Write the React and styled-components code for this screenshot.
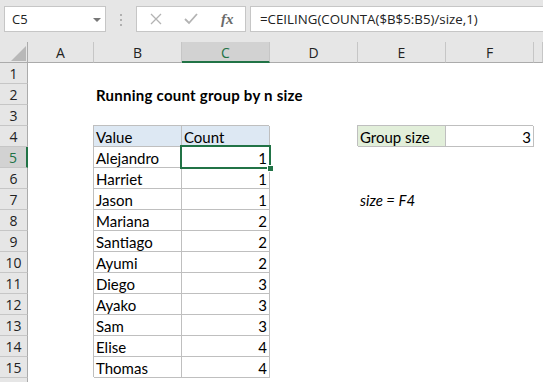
import React from 'react';
import styled, { createGlobalStyle, css } from 'styled-components';

const GREEN = '#217346';
const HEAD_BG = '#e6e6e6';
const SEL_BG = '#d2d2d2';
const TABLE_LINE = '#bfbfbf';
const SHEET_FONT = "Lato, 'Liberation Sans', sans-serif";

const GlobalStyle = createGlobalStyle`
  body {
    margin: 0;
    padding: 0;
    background: ${HEAD_BG};
    overflow: hidden;
  }
`;

const Window = styled.div`
  width: 543px;
  height: 382px;
  overflow: hidden;
  background: ${HEAD_BG};
`;

const Toolbar = styled.div`
  display: flex;
  align-items: flex-start;
  height: 42px;
  padding: 6px 0 0 4px;
  box-sizing: border-box;
`;

const NameBox = styled.div`
  display: flex;
  align-items: center;
  justify-content: space-between;
  width: 102px;
  height: 26px;
  box-sizing: border-box;
  padding: 0 4px 0 7px;
  background: #fff;
  border: 1px solid #c6c6c6;
  font-family: 'Open Sans', sans-serif;
  font-size: 13px;
  color: #222;
`;

const DropArrow = styled.span`
  width: 0;
  height: 0;
  border-left: 4px solid transparent;
  border-right: 4px solid transparent;
  border-top: 4px solid #777;
  margin-top: 1px;
`;

const Grip = styled.div`
  display: flex;
  flex-direction: column;
  gap: 3px;
  width: 30px;
  align-items: center;
  padding-top: 8px;
`;

const Dot = styled.span`
  width: 2px;
  height: 2px;
  background: #b0b0b0;
`;

const FuncBox = styled.div`
  display: flex;
  align-items: center;
  width: 110px;
  height: 26px;
  box-sizing: border-box;
  background: #fff;
  border: 1px solid #c6c6c6;
  padding: 0 0 0 13px;
  gap: 22px;
`;

const Fx = styled.span`
  font-family: 'Liberation Serif', serif;
  font-style: italic;
  font-weight: bold;
  font-size: 15px;
  color: #6a6a6a;
  margin-left: 1px;
`;

const Formula = styled.div`
  flex: 1;
  display: flex;
  align-items: center;
  height: 26px;
  box-sizing: border-box;
  margin-left: 4px;
  padding-left: 9px;
  background: #fff;
  border: 1px solid #c6c6c6;
  border-right: none;
  font-family: 'Open Sans', sans-serif;
  font-size: 13.3px;
  color: #222;
  white-space: nowrap;
`;

const Sheet = styled.div`
  display: grid;
  grid-template-columns: 28px 66px 88px 88px 88px 88px 88px 1fr;
  grid-auto-rows: 21px;
  background: #fff;
`;

const Corner = styled.div`
  background: ${HEAD_BG};
  border-right: 1px solid #ababab;
  border-bottom: 1px solid #ababab;
  display: flex;
  align-items: flex-end;
  justify-content: flex-end;
  padding: 0 1px 1px 0;
`;

const Triangle = styled.span`
  width: 0;
  height: 0;
  border-left: 15px solid transparent;
  border-bottom: 15px solid #b8b8b8;
`;

const ColHead = styled.div`
  background: ${p => (p.$selected ? SEL_BG : HEAD_BG)};
  border-right: 1px solid #c6c6c6;
  border-bottom: ${p => (p.$selected ? `2px solid ${GREEN}` : '1px solid #ababab')};
  display: flex;
  align-items: center;
  justify-content: center;
  padding-top: ${p => (p.$selected ? '1px' : '0')};
  font-family: 'Open Sans', sans-serif;
  font-size: 14px;
  color: ${p => (p.$selected ? GREEN : '#222')};
`;

const RowHead = styled.div`
  background: ${p => (p.$selected ? SEL_BG : HEAD_BG)};
  border-right: ${p => (p.$selected ? `2px solid ${GREEN}` : '1px solid #ababab')};
  border-bottom: 1px solid #c6c6c6;
  display: flex;
  align-items: center;
  justify-content: center;
  font-family: 'Open Sans', sans-serif;
  font-size: 14px;
  color: ${p => (p.$selected ? GREEN : '#222')};
`;

const Cell = styled.div`
  position: relative;
  display: flex;
  align-items: flex-end;
  justify-content: ${p => (p.$right ? 'flex-end' : 'flex-start')};
  padding: 0 3px 1px 2px;
  font-family: ${SHEET_FONT};
  font-size: 15px;
  font-weight: ${p => (p.$bold ? 700 : 400)};
  letter-spacing: ${p => (p.$bold ? '0.25px' : '0')};
  font-style: ${p => (p.$italic ? 'italic' : 'normal')};
  color: #000;
  white-space: nowrap;
  background: ${p => p.$fill || 'transparent'};
  ${p =>
    p.$boxed &&
    css`
      box-shadow: -1px -1px 0 0 ${TABLE_LINE}, inset -1px -1px 0 0 ${TABLE_LINE};
    `}
  ${p =>
    p.$active &&
    css`
      z-index: 2;
      &::after {
        content: '';
        position: absolute;
        top: -2px;
        left: -2px;
        right: -1px;
        bottom: -1px;
        border: 2px solid ${GREEN};
      }
      &::before {
        content: '';
        position: absolute;
        right: -4px;
        bottom: -4px;
        width: 5px;
        height: 5px;
        background: ${GREEN};
        border: 1px solid #fff;
        z-index: 3;
      }
    `}
`;

const names = ['Alejandro', 'Harriet', 'Jason', 'Mariana', 'Santiago', 'Ayumi', 'Diego', 'Ayako', 'Sam', 'Elise', 'Thomas'];
const counts = [1, 1, 1, 2, 2, 2, 3, 3, 3, 4, 4];

const cells = {
  B2: { text: 'Running count group by n size', bold: true },
  B4: { text: 'Value', boxed: true, fill: '#dde8f3' },
  C4: { text: 'Count', boxed: true, fill: '#dde8f3' },
  E4: { text: 'Group size', boxed: true, fill: '#e2efda' },
  F4: { text: '3', boxed: true, right: true },
  E7: { text: 'size = F4', italic: true },
};
names.forEach((n, i) => {
  cells[`B${i + 5}`] = { text: n, boxed: true };
  cells[`C${i + 5}`] = { text: String(counts[i]), boxed: true, right: true, active: i === 0 };
});

const cols = ['A', 'B', 'C', 'D', 'E', 'F', 'G'];
const rows = Array.from({ length: 16 }, (_, i) => i + 1);

export default function App() {
  return (
    <Window>
      <GlobalStyle />
      <Toolbar>
        <NameBox>
          C5
          <DropArrow />
        </NameBox>
        <Grip>
          <Dot />
          <Dot />
          <Dot />
        </Grip>
        <FuncBox>
          <svg width="12" height="12" viewBox="0 0 12 12">
            <path d="M1 1 L11 11 M11 1 L1 11" stroke="#b3b3b3" strokeWidth="1.3" />
          </svg>
          <svg width="14" height="12" viewBox="0 0 14 12">
            <path d="M1 6 L5 10 L13 1" stroke="#b3b3b3" strokeWidth="1.8" fill="none" />
          </svg>
          <Fx>fx</Fx>
        </FuncBox>
        <Formula>=CEILING(COUNTA($B$5:B5)/size,1)</Formula>
      </Toolbar>
      <Sheet>
        <Corner>
          <Triangle />
        </Corner>
        {cols.map(c => (
          <ColHead key={c} $selected={c === 'C'}>
            {c === 'G' ? '' : c}
          </ColHead>
        ))}
        {rows.map(r => (
          <React.Fragment key={r}>
            {/* row 16 only peeks in at the bottom edge, its label sits below the fold */}
            <RowHead $selected={r === 5}>{r < 16 ? r : ''}</RowHead>
            {cols.map(c => {
              const d = cells[`${c}${r}`] || {};
              return (
                <Cell
                  key={c}
                  $bold={d.bold}
                  $italic={d.italic}
                  $boxed={d.boxed}
                  $fill={d.fill}
                  $right={d.right}
                  $active={d.active}
                >
                  {d.text}
                </Cell>
              );
            })}
          </React.Fragment>
        ))}
      </Sheet>
    </Window>
  );
}
